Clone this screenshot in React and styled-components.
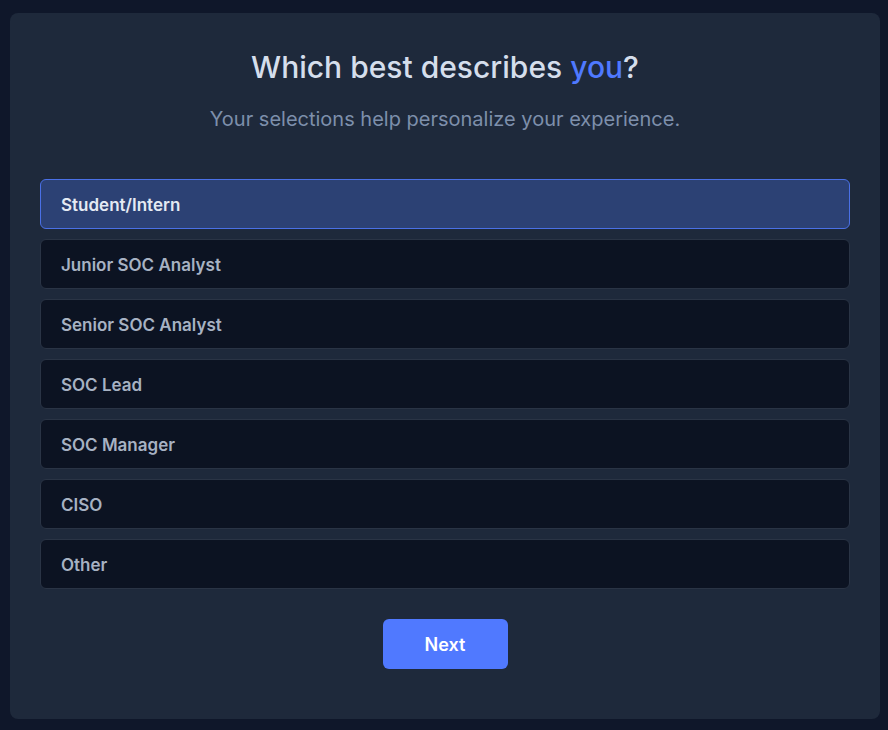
import React, { useState } from 'react';
import styled, { createGlobalStyle } from 'styled-components';

const GlobalStyle = createGlobalStyle`
  html, body {
    margin: 0;
    padding: 0;
    background: #0f172a;
  }
  body {
    font-family: Inter, "Noto Sans", sans-serif;
  }
`;

const roles = [
  'Student/Intern',
  'Junior SOC Analyst',
  'Senior SOC Analyst',
  'SOC Lead',
  'SOC Manager',
  'CISO',
  'Other',
];

const App = () => {
  const [selected, setSelected] = useState('Student/Intern');

  return (
    <Page>
      <GlobalStyle />
      <Card>
        <Title>
          Which best describes <Accent>you</Accent>?
        </Title>
        <Subtitle>Your selections help personalize your experience.</Subtitle>
        <OptionList>
          {roles.map((role) => (
            <Option
              key={role}
              $active={selected === role}
              onClick={() => setSelected(role)}
            >
              {role}
            </Option>
          ))}
        </OptionList>
        <NextButton>Next</NextButton>
      </Card>
    </Page>
  );
};

export default App;

const Page = styled.div`
  min-height: 730px;
  box-sizing: border-box;
  padding: 13px 8px 12px 10px;
`;

const Card = styled.div`
  background: #1e293b;
  border-radius: 8px;
  padding: 34px 30px 50px;
  display: flex;
  flex-direction: column;
  align-items: center;
`;

const Title = styled.h1`
  margin: 0;
  font-size: 30px;
  font-weight: 500;
  line-height: 40px;
  color: #d5deec;
`;

const Accent = styled.span`
  color: #4f79ff;
`;

const Subtitle = styled.p`
  margin: 20px 0 0;
  font-size: 20px;
  line-height: 24px;
  color: #7d8fab;
`;

const OptionList = styled.div`
  margin-top: 48px;
  width: 100%;
  display: flex;
  flex-direction: column;
  gap: 10px;
`;

const Option = styled.div`
  box-sizing: border-box;
  height: 50px;
  display: flex;
  align-items: center;
  padding: 2px 20px 0;
  border-radius: 6px;
  font-size: 17px;
  font-weight: 600;
  cursor: pointer;
  background: ${(p) => (p.$active ? '#2c4174' : '#0c1322')};
  border: 1px solid ${(p) => (p.$active ? '#4a70e6' : '#2a3445')};
  color: ${(p) => (p.$active ? '#e4eaf3' : '#a7b2c3')};
`;

const NextButton = styled.button`
  margin-top: 30px;
  width: 125px;
  height: 50px;
  border: none;
  border-radius: 6px;
  background: #5079ff;
  color: #ffffff;
  font-family: Inter, "Noto Sans", sans-serif;
  font-size: 18px;
  font-weight: 600;
  cursor: pointer;
`;
